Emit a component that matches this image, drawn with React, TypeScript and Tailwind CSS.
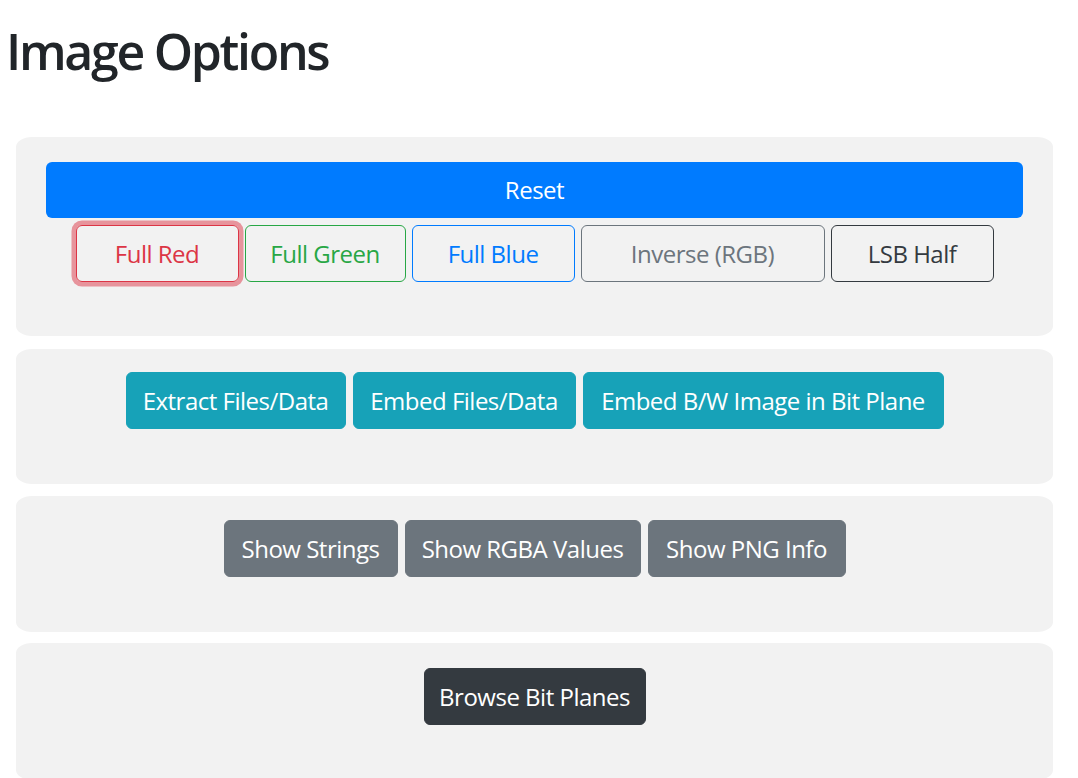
import React from "react";

const font = { fontFamily: '"Segoe UI", "Open Sans", "Noto Sans", sans-serif' };

function Panel({ children, className = "" }: { children: React.ReactNode; className?: string }) {
  return (
    <div className={`bg-[#f2f2f2] rounded-[16px_/_10px] px-[30px] ${className}`}>
      {children}
    </div>
  );
}

const base =
  "h-[57px] rounded-[6px] border text-[24px] leading-[36px] tracking-[-0.5px] whitespace-nowrap flex items-center justify-center shrink-0";

export default function App() {
  return (
    <div className="min-h-[778px] bg-white text-[#212529]" style={font}>
      <h1 className="text-[50px] font-semibold leading-[60px] tracking-[-2.3px] pl-[6px] pt-[21px] m-0 text-[#212529]">
        Image Options
      </h1>
      <div className="ml-[16px] w-[1037px] mt-[56px] flex flex-col">
        <Panel className="pt-[25px] pb-[54px]">
          <button className="w-full h-[56px] rounded-[6px] bg-[#007bff] text-white text-[24px] leading-[36px] tracking-[-0.5px] flex items-center justify-center">
            Reset
          </button>
          <div className="mt-[7px] flex justify-center gap-[6px]">
            <button
              className={`${base} w-[163px] border-[#dc3545] text-[#dc3545] shadow-[0_0_0_4.5px_rgba(220,53,69,0.5)]`}
            >
              Full Red
            </button>
            <button className={`${base} w-[161px] border-[#28a745] text-[#28a745]`}>Full Green</button>
            <button className={`${base} w-[163px] border-[#007bff] text-[#007bff]`}>Full Blue</button>
            <button className={`${base} w-[244px] border-[#6c757d] text-[#6c757d]`}>Inverse (RGB)</button>
            <button className={`${base} w-[163px] border-[#343a40] text-[#343a40]`}>LSB Half</button>
          </div>
        </Panel>
        <Panel className="mt-[13px] pt-[23px] pb-[55px]">
          <div className="flex justify-center gap-[7px]">
            <button className={`${base} w-[220px] bg-[#17a2b8] border-[#17a2b8] text-white`}>Extract Files/Data</button>
            <button className={`${base} w-[223px] bg-[#17a2b8] border-[#17a2b8] text-white`}>Embed Files/Data</button>
            <button className={`${base} w-[361px] bg-[#17a2b8] border-[#17a2b8] text-white`}>
              Embed B/W Image in Bit Plane
            </button>
          </div>
        </Panel>
        <Panel className="mt-[12px] pt-[24px] pb-[55px]">
          <div className="flex justify-center gap-[7px]">
            <button className={`${base} w-[174px] bg-[#6c757d] border-[#6c757d] text-white`}>Show Strings</button>
            <button className={`${base} w-[236px] bg-[#6c757d] border-[#6c757d] text-white`}>Show RGBA Values</button>
            <button className={`${base} w-[198px] bg-[#6c757d] border-[#6c757d] text-white`}>Show PNG Info</button>
          </div>
        </Panel>
        <Panel className="mt-[11px] pt-[25px] pb-[55px]">
          <div className="flex justify-center">
            <button className={`${base} w-[222px] bg-[#343a40] border-[#343a40] text-white`}>Browse Bit Planes</button>
          </div>
        </Panel>
      </div>
    </div>
  );
}
